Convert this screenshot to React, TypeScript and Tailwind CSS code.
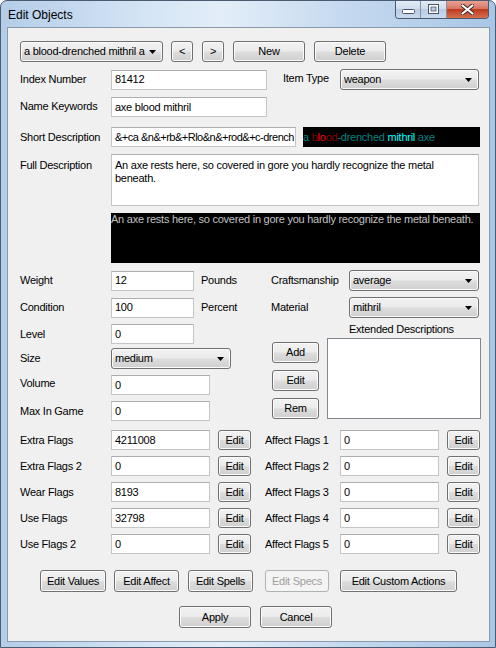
import React from 'react';
import clsx from 'clsx';

const btnFace =
  'border-[#707070] bg-[linear-gradient(#f2f2f2_0%,#ebebeb_48%,#dddddd_52%,#cfcfcf_100%)] shadow-[inset_0_0_0_1px_#fbfbfb]';

function Btn({ className, children, disabled }: { className?: string; children: React.ReactNode; disabled?: boolean }) {
  return (
    <button
      type="button"
      className={clsx(
        'flex shrink-0 items-center justify-center rounded-[3px] border leading-none',
        disabled ? 'border-[#adb2b5] bg-[#f4f4f4] text-[#a0a0a0]' : btnFace,
        className,
      )}
    >
      {children}
    </button>
  );
}

function Combo({ className, value }: { className?: string; value: string }) {
  return (
    <div className={clsx('flex shrink-0 items-center justify-between rounded-[3px] border pl-[3px] pr-[6px]', btnFace, className)}>
      <span className="truncate">{value}</span>
      <svg width="7" height="4" viewBox="0 0 7 4" className="shrink-0">
        <path d="M0 0h7L3.5 4z" fill="#000" />
      </svg>
    </div>
  );
}

function TextBox({ className, value }: { className?: string; value?: string }) {
  return (
    <div
      className={clsx(
        'flex h-[20px] shrink-0 items-center overflow-hidden whitespace-nowrap border border-[#c3c5cb] border-t-[#abadb3] bg-white pl-[3px]',
        className,
      )}
    >
      {value}
    </div>
  );
}

function Label({ className, children }: { className?: string; children: React.ReactNode }) {
  return <span className={clsx('shrink-0 whitespace-nowrap', className)}>{children}</span>;
}

function FlagRow({ left, leftVal, right, rightVal }: { left: string; leftVal: string; right: string; rightVal: string }) {
  return (
    <div className="flex h-[20px] items-center">
      <Label className="ml-[12px] w-[91px]">{left}</Label>
      <TextBox className="w-[99px]" value={leftVal} />
      <Btn className="ml-[8px] h-[20px] w-[33px]">Edit</Btn>
      <Label className="ml-[14px] w-[75px]">{right}</Label>
      <TextBox className="w-[99px]" value={rightVal} />
      <Btn className="ml-[8px] h-[20px] w-[33px]">Edit</Btn>
    </div>
  );
}

function CaptionButtons() {
  return (
    <div className="-mt-[1px] mr-[6px] ml-auto flex h-[19px] overflow-hidden rounded-b-[4px] border border-t-0 border-[#4b5a6c]">
      <div className="flex w-[25px] items-end justify-center border-r border-[#8393a6] bg-[linear-gradient(#e6eef8,#cfdcec_50%,#b8cbe2_51%,#c9daee)] pb-[4px]">
        <svg width="13" height="5" viewBox="0 0 13 5">
          <rect x="0.5" y="0.5" width="12" height="4" rx="1" fill="#fff" stroke="#4a5667" />
        </svg>
      </div>
      <div className="flex w-[26px] items-center justify-center border-r border-[#8393a6] bg-[linear-gradient(#e6eef8,#cfdcec_50%,#b8cbe2_51%,#c9daee)]">
        <svg width="11" height="10" viewBox="0 0 11 10">
          <rect x="0.5" y="0.5" width="10" height="9" fill="#fff" stroke="#4a5667" />
          <rect x="3" y="3" width="5" height="4" fill="#b9cbe1" stroke="#4a5667" strokeWidth="0.8" />
        </svg>
      </div>
      <div className="flex w-[41px] items-center justify-center bg-[linear-gradient(#e9a99b,#d7735f_50%,#c0391f_51%,#d4704e)]">
        <svg width="13" height="11" viewBox="0 0 13 11">
          <path d="M1.5 1.5 11.5 9.5M11.5 1.5 1.5 9.5" stroke="#3b2a25" strokeWidth="4" strokeLinecap="round" />
          <path d="M1.5 1.5 11.5 9.5M11.5 1.5 1.5 9.5" stroke="#fff" strokeWidth="2.2" strokeLinecap="round" />
        </svg>
      </div>
    </div>
  );
}

export default function App() {
  return (
    <div className="h-[648px] w-[496px] overflow-hidden rounded-t-[7px] border border-[#4c5c70] bg-[linear-gradient(90deg,#b4cde8_0%,#d5e5f5_30%,#e3edf8_45%,#c4d9ef_70%,#a9c6e6_100%)] font-['Liberation_Sans',Arial,sans-serif] text-[11px] tracking-[-0.25px] text-black">
      {/* title bar */}
      <div className="flex h-[26px] items-start">
        <span className="mt-[5px] ml-[7px] text-[12px] tracking-normal">Edit Objects</span>
        <CaptionButtons />
      </div>

      {/* client area */}
      <div className="ml-[6px] h-[615px] w-[483px] border border-[#8a9aab] bg-[#f0f0f0]">
        <div className="mt-[13px] flex h-[21px] items-center">
          <Combo className="ml-[12px] h-[21px] w-[143px]" value="a blood-drenched mithril a" />
          <Btn className="ml-[8px] h-[21px] w-[22px]">&lt;</Btn>
          <Btn className="ml-[9px] h-[21px] w-[22px]">&gt;</Btn>
          <Btn className="ml-[9px] h-[21px] w-[72px]">New</Btn>
          <Btn className="ml-[9px] h-[21px] w-[72px]">Delete</Btn>
        </div>

        <div className="mt-[7px] flex h-[21px] items-center">
          <Label className="ml-[12px] w-[91px]">Index Number</Label>
          <TextBox className="w-[156px]" value="81412" />
          <Label className="ml-[16px] w-[57px] -mt-[3px]">Item Type</Label>
          <Combo className="h-[21px] w-[139px]" value="weapon" />
        </div>

        <div className="mt-[7px] flex h-[20px] items-center">
          <Label className="ml-[12px] w-[91px] -mt-[1px]">Name Keywords</Label>
          <TextBox className="w-[156px]" value="axe blood mithril" />
        </div>

        <div className="mt-[10px] flex h-[20px] items-center">
          <Label className="ml-[12px] w-[91px]">Short Description</Label>
          <TextBox className="w-[185px] tracking-[-0.5px]" value="&+ca &n&+rb&+Rlo&n&+rod&+c-drench" />
          <div className="ml-[7px] h-[20px] w-[177px] whitespace-pre bg-black leading-[20px]">
            <span className="text-[#008080]">a </span>
            <span className="text-[#800000]">b</span>
            <span className="text-[#ff0000]">lo</span>
            <span className="text-[#800000]">od</span>
            <span className="text-[#008080]">-drenched </span>
            <span className="text-[#00ffff]">mithril</span>
            <span className="text-[#008080]"> axe</span>
          </div>
        </div>

        <div className="mt-[7px] flex items-start">
          <Label className="ml-[12px] w-[91px] pt-[3px]">Full Description</Label>
          <div className="h-[52px] w-[368px] shrink-0 border border-[#c3c5cb] border-t-[#abadb3] bg-white pt-[4px] pl-[3px] leading-[13px]">
            An axe rests here, so covered in gore you hardly recognize the metal
            <br />
            beneath.
          </div>
        </div>

        <div className="mt-[7px] ml-[103px] h-[50px] w-[369px] bg-black leading-[13px] whitespace-nowrap text-[#c0c0c0]">
          An axe rests here, so covered in gore you hardly recognize the metal beneath.
        </div>

        <div className="mt-[7px] flex h-[21px] items-center">
          <Label className="ml-[12px] w-[91px]">Weight</Label>
          <TextBox className="w-[83px]" value="12" />
          <Label className="ml-[7px] w-[70px]">Pounds</Label>
          <Label className="w-[78px]">Craftsmanship</Label>
          <Combo className="h-[21px] w-[130px]" value="average" />
        </div>

        <div className="mt-[6px] flex h-[21px] items-center">
          <Label className="ml-[12px] w-[91px]">Condition</Label>
          <TextBox className="w-[83px]" value="100" />
          <Label className="ml-[7px] w-[70px]">Percent</Label>
          <Label className="w-[78px]">Material</Label>
          <Combo className="h-[21px] w-[130px]" value="mithril" />
        </div>

        <div className="mt-[6px] flex">
          <div className="flex w-[264px] shrink-0 flex-col">
            <div className="flex h-[20px] items-center">
              <Label className="ml-[12px] w-[91px]">Level</Label>
              <TextBox className="w-[83px]" value="0" />
            </div>
            <div className="mt-[4px] flex h-[21px] items-center">
              <Label className="ml-[12px] w-[91px]">Size</Label>
              <Combo className="h-[21px] w-[120px]" value="medium" />
            </div>
            <div className="mt-[6px] flex h-[20px] items-center">
              <Label className="ml-[12px] w-[91px] -mt-[4px]">Volume</Label>
              <TextBox className="w-[99px]" value="0" />
            </div>
            <div className="mt-[6px] flex h-[20px] items-center">
              <Label className="ml-[12px] w-[91px]">Max In Game</Label>
              <TextBox className="w-[99px]" value="0" />
            </div>
          </div>

          <div className="flex flex-col">
            <Label className="-mt-[1px] ml-[77px] h-[13px] leading-[13px]">Extended Descriptions</Label>
            <div className="mt-[2px] flex">
              <div className="mt-[4px] flex flex-col gap-[7px]">
                <Btn className="h-[21px] w-[47px]">Add</Btn>
                <Btn className="h-[21px] w-[47px]">Edit</Btn>
                <Btn className="h-[21px] w-[47px]">Rem</Btn>
              </div>
              <div className="ml-[8px] h-[81px] w-[154px] border border-[#828790] bg-white" />
            </div>
          </div>
        </div>

        <div className="mt-[9px] flex flex-col gap-[6px]">
          <FlagRow left="Extra Flags" leftVal="4211008" right="Affect Flags 1" rightVal="0" />
          <FlagRow left="Extra Flags 2" leftVal="0" right="Affect Flags 2" rightVal="0" />
          <FlagRow left="Wear Flags" leftVal="8193" right="Affect Flags 3" rightVal="0" />
          <FlagRow left="Use Flags" leftVal="32798" right="Affect Flags 4" rightVal="0" />
          <FlagRow left="Use Flags 2" leftVal="0" right="Affect Flags 5" rightVal="0" />
        </div>

        <div className="mt-[16px] flex h-[22px] items-center">
          <Btn className="ml-[32px] h-[22px] w-[66px]">Edit Values</Btn>
          <Btn className="ml-[8px] h-[22px] w-[65px]">Edit Affect</Btn>
          <Btn className="ml-[9px] h-[22px] w-[65px]">Edit Spells</Btn>
          <Btn className="ml-[12px] h-[22px] w-[64px]" disabled>
            Edit Specs
          </Btn>
          <Btn className="ml-[11px] h-[22px] w-[117px]">Edit Custom Actions</Btn>
        </div>

        <div className="mt-[14px] flex h-[22px] items-center">
          <Btn className="ml-[171px] h-[22px] w-[72px]">Apply</Btn>
          <Btn className="ml-[9px] h-[22px] w-[72px]">Cancel</Btn>
        </div>
      </div>
    </div>
  );
}
